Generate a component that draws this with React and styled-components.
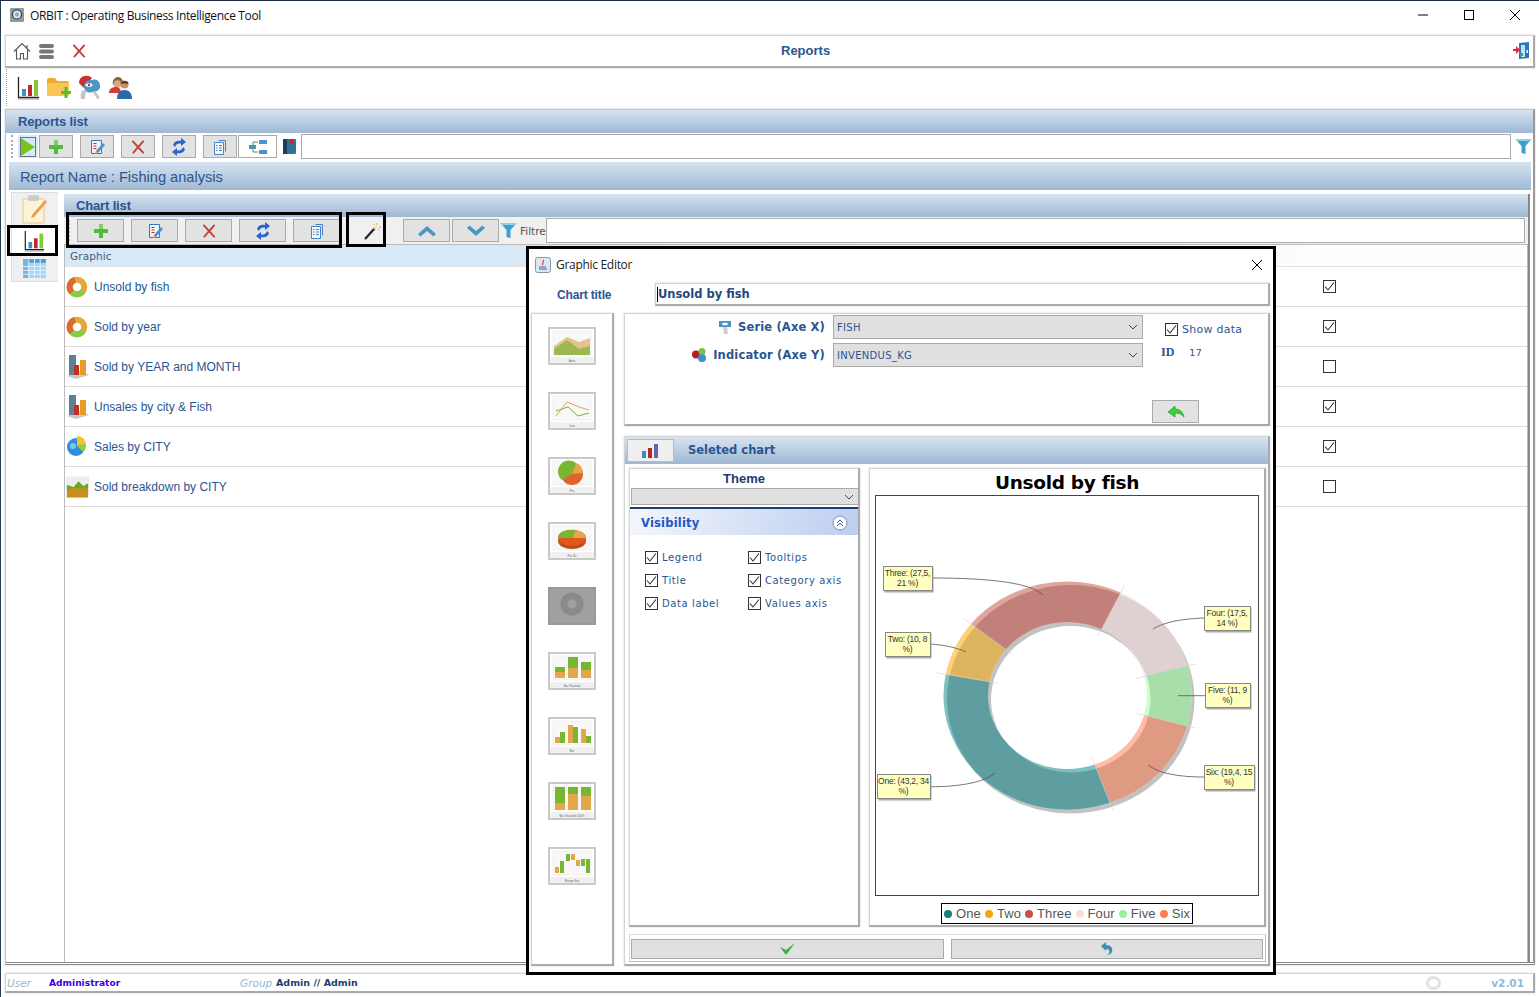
import React from "react";
import styled, { createGlobalStyle, css } from "styled-components";

const Global = createGlobalStyle`
  html, body { margin: 0; padding: 0; background: #fff; }
  * { box-sizing: border-box; }
`;
const NAVY = "#2a5590";
const tahoma = `"Liberation Sans", Arial, sans-serif`;
const verdana = `"DejaVu Sans", Verdana, sans-serif`;
const raised = css`
  background: #fff;
  border: 1px solid #d4d4d4;
  border-right: 2px solid #aaa;
  border-bottom: 2px solid #aaa;
  box-shadow: 0 0 2px rgba(0,0,0,.18);
`;
const blueBar = css`background: linear-gradient(#d6e3f1, #9fb8d3);`;

const Root = styled.div`
  position: relative; width: 1539px; height: 997px; overflow: hidden; background: #fff;
  display: flex; flex-direction: column; border-top: 1px solid #1c2a44; border-left: 1px solid #2a3a55;
  font-family: ${tahoma};
`;
const TitleBar = styled.div`height: 34px; display: flex; align-items: center; padding: 0 1px 6px 8px; flex: none;`;
const TitleText = styled.span`font: 12px "Open Sans", sans-serif; color: #111; margin-left: 5px; letter-spacing: -.36px;`;
const WinButtons = styled.div`margin-left: auto; display: flex; align-items: center;`;
const WinBtn = styled.div`width: 46px; height: 28px; display: flex; align-items: center; justify-content: center;`;
const HeaderBar = styled.div`
  ${raised}; flex: none; height: 33px; margin: 0 4px 0 4px; display: flex; align-items: center; padding: 0 3px 1px 6px; position: relative;
`;
const HeaderIcons = styled.div`display: flex; align-items: center; gap: 6px; width: 769px;`;
const HeaderTitle = styled.div`font: bold 13px ${tahoma}; color: ${NAVY}; width: 50px; white-space: nowrap;`;
const EndGroup = styled.div`margin-left: auto; display: flex; align-items: center;`;
const MainTools = styled.div`flex: none; height: 37px; margin: 1px 0 0 5px; display: flex; align-items: center; gap: 6px; padding-left: 9px; border-left: 1px dotted #999;`;
const ReportsPanel = styled.div`
  flex: 1; min-height: 0; margin: 3px 4px 0 4px; border: 1px solid #c4c4c4; border-right: 2px solid #999; border-bottom: 3px double #888;
  display: flex; flex-direction: column; box-shadow: 0 0 2px rgba(0,0,0,.2);
`;
const PanelHead = styled.div`
  ${blueBar}; flex: none; height: 23px; display: flex; align-items: center; padding: 0 0 0 ${p => p.$pl}px;
  font: bold 13px ${tahoma}; color: ${NAVY}; letter-spacing: -.15px;
`;
const ReportTools = styled.div`flex: none; height: 27px; display: flex; align-items: center; padding: 0 1px 0 3px;`;
const Grip = styled.div`width: ${p => p.$w}px; flex: none; align-self: stretch; margin: 2px 0 2px ${p => p.$ml || 0}px; border-left: 2px dotted #aaa;`;
const PlayBtn = styled.div`width: 20px; height: 23px; background: #d6eaf8; display: flex; align-items: center; justify-content: center; margin-right: 1px; flex: none;`;
const ToolBtn = styled.button`
  width: ${p => p.$w || 34}px; height: 23px; padding: 0; margin-right: ${p => p.$mr ?? 7}px; flex: none;
  background: ${p => p.$white ? "#fff" : "#e2e2e2"}; border: 1px solid #aaa; display: flex; align-items: center; justify-content: center;
`;
const SearchBox = styled.input`flex: 1; min-width: 0; height: 25px; border: 1px solid #aaa; background: #fff; outline: none;`;
const ReportBar = styled.div`
  ${blueBar}; flex: none; height: 28px; margin: 2px 2px 0 3px; display: flex; align-items: center; padding: 2px 0 0 11px;
  font: 14.6px ${tahoma}; color: ${NAVY};
`;
const Body = styled.div`flex: 1; min-height: 0; display: flex; padding: 2px 3px 0 5px;`;
const SideTabs = styled.div`width: 47px; height: 90px; flex: none; display: flex; flex-direction: column; border: 1px solid #ddd; border-right: none; background: #f0f0f0;`;
const SideTab = styled.div`height: ${p => p.$h}px; display: flex; align-items: center; justify-content: center; padding-right: 2px; background: ${p => p.$active ? "#fff" : "#f0f0f0"};`;
const ChartPanel = styled.div`flex: 1; min-width: 0; margin: 2px 0 0 6px; display: flex; flex-direction: column; border-right: 2px solid #888;`;
const ChartTools = styled.div`flex: none; height: 27px; background: #f0f0f0; display: flex; align-items: center; padding: 1px 3px 1px 4px;`;
const Spacer = styled.div`width: ${p => p.$w}px; flex: none; display: flex; justify-content: ${p => p.$j || "center"};`;
const FiltreLabel = styled.span`font: 10.5px ${verdana}; color: #555; width: 26px; overflow: hidden; white-space: nowrap; flex: none;`;
const Table = styled.div`flex: 1; min-height: 0; border: 1px solid #bbb; border-bottom: none;`;
const TableHead = styled.div`
  height: 22px; background: linear-gradient(90deg, #d7e8f6 35%, #fbfdfe 85%); border-bottom: 1px solid #e2e2e2;
  display: flex; align-items: center; padding-left: 5px; font: 10.5px ${verdana}; color: #44607c; letter-spacing: .1px;
`;
const Row = styled.div`height: 40px; display: flex; align-items: center; padding: 0 191px 0 1px; border-bottom: 1px solid #ddd;`;
const RowIcon = styled.div`width: 28px; display: flex; justify-content: flex-start; flex: none;`;
const RowText = styled.span`font: 12px ${tahoma}; color: ${NAVY}; flex: 1;`;
const Box = styled.span`
  width: 13px; height: 13px; border: 1px solid #333; background: #fff; display: inline-flex; align-items: center; justify-content: center; flex: none;
`;
const StatusBar = styled.div`
  ${raised}; flex: none; height: 20px; margin: 8px 4px 4px 4px; display: flex; align-items: center; padding: 0 9px 0 1px;
`;
const StatusKey = styled.span`font: italic 10.5px ${verdana}; color: #93b8d2; width: ${p => p.$w}px; flex: none;`;
const StatusVal = styled.span`font: bold ${p => p.$fs}px ${verdana}; color: ${p => p.$c}; width: ${p => p.$w}px; flex: none;`;
const Version = styled.span`font: bold 10.5px ${verdana}; color: #8fbbd8;`;
const Ring = styled.span`width: 15px; height: 14px; border: 3px solid #e2e2e2; border-radius: 50%; margin-right: 50px;`;

const Highlight = styled.div`
  position: absolute; left: ${p => p.$x}px; top: ${p => p.$y}px; width: ${p => p.$w}px; height: ${p => p.$h}px;
  border: 3px solid #000; pointer-events: none;
`;

/* dialog */
const Dialog = styled.div`
  position: absolute; left: 525px; top: 245px; width: 750px; height: 729px; background: #fff; border: 3px solid #000;
  display: flex; flex-direction: column; font-family: ${tahoma};
`;
const DlgTitle = styled.div`flex: none; height: 32px; display: flex; align-items: center; padding: 0 10px 1px 6px;`;
const DlgTitleText = styled.span`font: 12px "Open Sans", sans-serif; color: #222; margin-left: 5px; letter-spacing: -.3px;`;
const DlgClose = styled.div`margin-left: auto; display: flex;`;
const TitleRow = styled.div`flex: none; height: 32px; display: flex; align-items: center; padding: 2px 3px 7px 28px;`;
const TitleLabel = styled.label`font: bold 12px ${tahoma}; color: ${NAVY}; width: 98px; flex: none; letter-spacing: -.15px;`;
const TitleInput = styled.div`
  ${raised}; flex: 1; height: 23px; font: bold 11.5px ${verdana}; color: #23497f; display: flex; align-items: center; padding-left: 1px;
`;
const Caret = styled.span`width: 1px; height: 15px; background: #000;`;
const DlgBody = styled.div`flex: 1; min-height: 0; display: flex; padding: 0 3px 6px 2px; gap: 10px;`;
const ThumbCol = styled.div`${raised}; width: 83px; flex: none; display: flex; flex-direction: column; align-items: center; gap: 27px; padding-top: 13px; padding-right: 1px;`;
const Thumb = styled.div`width: 48px; height: 38px; border: 2px solid ${p => p.$off ? "#999" : "#c9c9c9"}; background: ${p => p.$off ? "#a0a0a0" : "#fff"}; flex: none;`;
const RightCol = styled.div`flex: 1; min-width: 0; display: flex; flex-direction: column; gap: 10px;`;
const FormPanel = styled.div`
  ${raised}; flex: none; height: 113px; display: grid; grid-template-columns: 200px 310px 1fr; grid-template-rows: 24px 24px 1fr;
  column-gap: 8px; row-gap: 4px; padding: 1px 0 0 0; align-items: center;
`;
const FieldLabel = styled.label`display: flex; justify-content: flex-end; align-items: center; gap: 5px; font: bold 11.5px ${verdana}; color: ${NAVY}; letter-spacing: .15px;`;
const Select = styled.div`
  height: 24px; background: #e0e0e0; border: 1px solid #aaa; font: 10px ${verdana}; color: ${NAVY}; display: flex; align-items: center; justify-content: space-between;
  padding: 0 4px 0 3px; letter-spacing: .3px;
`;
const ShowData = styled.label`display: flex; align-items: center; gap: 4px; font: 11px ${verdana}; color: ${NAVY}; padding: 4px 0 0 14px; letter-spacing: .25px;`;
const IdLine = styled.div`display: flex; align-items: center; padding: 0 0 6px 10px; gap: 15px; color: ${NAVY};`;
const IdKey = styled.b`font: bold 12px "Liberation Serif", serif;`;
const IdVal = styled.span`font: 9.5px ${verdana}; letter-spacing: .3px;`;
const BackRow = styled.div`grid-column: 3; grid-row: 3; align-self: end; padding: 0 0 1px 1px; display: flex;`;
const ChartGroup = styled.div`${raised}; flex: 1; min-height: 0; display: flex; flex-direction: column;`;
const GroupHead = styled.div`${blueBar}; flex: none; height: 27px; display: flex; align-items: center; padding-left: 2px;`;
const GroupTab = styled.div`width: 47px; height: 23px; background: #efefef; border: 1px solid #bbb; display: flex; align-items: center; justify-content: center; margin-right: 14px;`;
const GroupTitle = styled.span`font: bold 11.5px ${verdana}; color: ${NAVY}; padding-bottom: 1px;`;
const GroupMain = styled.div`flex: 1; min-height: 0; display: flex; flex-direction: column; padding: 4px 2px 2px 4px;`;
const Split = styled.div`flex: none; height: 459px; display: flex; gap: 9px;`;
const ThemeCol = styled.div`${raised}; width: 231px; flex: none; display: flex; flex-direction: column;`;
const ThemeTitle = styled.div`text-align: center; font: bold 13px ${tahoma}; color: #1d3c6c; height: 19px; line-height: 20px;`;
const ThemeSelect = styled(Select)`height: 17px; margin: 0 0 0 1px; width: 228px; justify-content: flex-end;`;
const VisHead = styled.div`
  margin-top: 2px; border-top: 2px solid #1f3f72; height: 28px; background: linear-gradient(100deg, #f4f6fc, #bccef0); display: flex; align-items: center; justify-content: space-between;
  padding: 1px 10px 0 11px; font: bold 11.5px ${verdana}; color: #2156c6; letter-spacing: .2px;
`;
const Checks = styled.div`display: grid; grid-template-columns: 103px 1fr; row-gap: 9px; padding: 15px 0 0 15px;`;
const CheckLabel = styled.label`display: flex; align-items: center; gap: 4px; font: 10px ${verdana}; color: ${NAVY}; letter-spacing: .6px; height: 14px;`;
const PlotCol = styled.div`${raised}; flex: 1; min-width: 0; display: flex; flex-direction: column; align-items: center; padding: 0 5px;`;
const PlotTitle = styled.div`font: bold 18.5px ${verdana}; color: #000; height: 26px; line-height: 28px; letter-spacing: -.3px;`;
const PlotBox = styled.div`width: 100%; height: 401px; border: 1px solid #444; flex: none;`;
const LegendBox = styled.div`
  margin-top: 7px; height: 21px; border: 1px solid #000; display: flex; align-items: center; padding: 0 2px; gap: 4px; font: 13px ${tahoma}; color: #555; letter-spacing: .1px;
`;
const LegendItem = styled.span`display: inline-flex; align-items: center; gap: 4px;`;
const Dot = styled.i`width: 8px; height: 8px; border-radius: 50%; background: ${p => p.$c}; display: block;`;
const ActionRow = styled.div`
  flex: none; margin-top: 7px; height: 28px; display: flex; gap: 7px; padding: 4px 2px 2px 1px; border: 1px solid #ddd; border-right: 1px solid #bbb; border-bottom: 1px solid #bbb;
`;
const ActionBtn = styled.div`flex: 1; background: #e0e0e0; border: 1px solid #aaa; display: flex; align-items: center; justify-content: center;`;

/* icons */
const S = ({ w = 16, h, vb, children }) => <svg width={w} height={h || w} viewBox={vb || `0 0 ${w} ${h || w}`}>{children}</svg>;
const Logo = () => <S><rect x="1" y="1" width="14" height="14" fill="#8a9aa0" rx="1"/><circle cx="8" cy="7.500" r="4.500" fill="#e8eef0" stroke="#234" strokeWidth="1.200"/><circle cx="8" cy="7.500" r="2.200" fill="#9ab"/></S>;
const Home = () => <S w={20}><path d="M2 10.500 10 2.500l8 8M4.500 9v9h4v-5.500h3V18h4V9M15 4v3" fill="none" stroke="#555" strokeWidth="1.100"/></S>;
const Menu = () => <S w={18} h={16}><rect x="1" y="1" width="15" height="4" rx="2" fill="#777"/><rect x="1" y="6.500" width="15" height="4" rx="2" fill="#777"/><rect x="1" y="12" width="15" height="4" rx="2" fill="#777"/></S>;
const RedX = ({ s = 14 }) => <S w={s} vb="0 0 15 15"><path d="M2 1.500 13 13.500M13 1.500 2.500 13.500" stroke="#c43c3c" strokeWidth="2" strokeLinecap="round"/></S>;
const Bars = ({ s = 24 }) => <S w={s} vb="0 0 24 24"><path d="M2.500 1v20.500H23" fill="none" stroke="#222" strokeWidth="1.300"/><path d="M2 23h21" stroke="#999" strokeWidth="1"/><rect x="6" y="13" width="4" height="7" fill="#3a93c8"/><rect x="12" y="9" width="4" height="11" fill="#c02a2a"/><rect x="18" y="4" width="4" height="16" fill="#86c83c"/></S>;
const FolderPlus = () => <S w={25} h={24}><path d="M1 4q0-2 2-2h6l2 3h10q2 0 2 2v12H1z" fill="#eeaa35"/><path d="M1 9q0-2 2-2h20v12q0 1-1 1H2q-1 0-1-1z" fill="#f9c656"/><path d="M15 15h3.500v-4h3v4h3.500v3h-3.500v4h-3v-4H15z" fill="#5dbb2c"/></S>;
const KeyUser = () => <S w={25} h={25} vb="0 0 23 25"><path d="M1 8c0-5 4-8 9-7 2 0 3 1 4 2L6 13z" fill="#c8322e"/><rect x="6" y="5" width="16" height="12" rx="5" fill="#4a97c4" transform="rotate(-10 14 11)"/><ellipse cx="11" cy="10" rx="3.500" ry="1.800" fill="#fff"/><circle cx="11" cy="10" r="1.200" fill="#c8322e"/><path d="M3 24c-1-4 0-8 3-9l3 1c-2 2-2 5-2 8zM14 17l3-1 4 5c1 2 0 3-2 3-1-3-3-5-5-7z" fill="#c4c4c4"/></S>;
const Users = () => <S w={25} h={24}><path d="M5 9c-1-5 2-8 5-8s6 3 5 8c-3-2-7-2-10 0z" fill="#8a6238"/><circle cx="9.500" cy="8" r="3.800" fill="#dba880"/><path d="M1 17c0-4 3-6 7-6 3 0 5 2 5 6z" fill="#d83a34"/><circle cx="16.500" cy="8.500" r="4" fill="#c98d68"/><path d="M12.500 8c0-4 8-4 8 0-3-1-5-1-8 0z" fill="#4a3424"/><path d="M9 23c0-6 3-9 7.500-9S24 17 24 23z" fill="#2a6aa8"/></S>;
const Play = () => <S w={16} h={20}><path d="M1 1 15 10 1 19z" fill="#7cc321"/><path d="M.5.500h15v19H.5z" fill="none" stroke="#000" strokeDasharray="1 1"/></S>;
const Plus = () => <S><path d="M6 1h4v5h5v4h-5v5H6v-5H1V6h5z" fill="#54bb3a"/><path d="M6 1h4v5H6z" fill="#7ad35f"/></S>;
const Edit = () => <S><path d="M2.500 1.500h10v13h-10z" fill="#eef4fb" stroke="#3a75ba"/><path d="M4.500 4.500h3M4.500 7h3M4.500 9.500h3" stroke="#d22"/><path d="M7 12 14 4l2 2-7 8-3 1z" fill="#4a92d8"/><path d="M6 15l1-3 2 2z" fill="#f0b030"/></S>;
const Refresh = () => <S h={18}><path d="M2 7c1-4 5-5 8-4V0l5 4-5 4V5.500C7 5 5 6 4 9z" fill="#2a62cc"/><path d="M14 11c-1 4-5 5-8 4v3l-5-4 5-4v2.500c3 .5 5-.5 6-3.500z" fill="#2a62cc"/></S>;
const Copy = () => <S><path d="M6.500 1.500h7v11" fill="none" stroke="#4a82c0"/><path d="M2.500 3.500h9v12h-9z" fill="#f2f7fc" stroke="#4a82c0"/><path d="M4 6.500h1.500M7 6.500h3M4 9h1.500M7 9h3M4 11.500h1.500M7 11.500h3" stroke="#4a82c0"/></S>;
const Tree = () => <S w={18} h={16}><rect x="0" y="6" width="7" height="4" fill="#4a92c8"/><rect x="10" y="1" width="8" height="4" fill="#4a92c8"/><rect x="10" y="11" width="8" height="4" fill="#4a92c8"/><path d="M4 6V3h5M4 10v3h5" fill="none" stroke="#4a9a30"/></S>;
const Book = () => <S w={14} h={17}><rect x="1" y="1" width="13" height="15" rx="1" fill="#2f7397"/><rect x="1" y="1" width="4" height="15" fill="#1c3f5e"/><rect x="8" y="1" width="3" height="5" fill="#c22"/></S>;
const Funnel = () => <S w={17} h={17}><path d="M.5 1h16l-6 7v8l-4-1V8z" fill="#3d9fcb"/><path d="M.5 1h16l-2 2h-12z" fill="#8fd0ea"/></S>;
const Wand = () => <S w={18} h={18}><path d="M2 17 12 6" stroke="#222" strokeWidth="2.200"/><path d="M11 7 14 4" stroke="#ddd" strokeWidth="2"/><path d="M14 1v2M16 5h2M11 2l1 1M16 8l-1-1" stroke="#e8a820" strokeWidth="1"/></S>;
const Chev = ({ up }) => <S w={18} h={12}><path d={up ? "M0 9 9 1l9 8-2.500 2.500L9 6l-6.500 5.500z" : "M0 3l9 8 9-8L15.500.500 9 6 2.500.500z"} fill="#4a97c4"/></S>;
const Door = () => <S w={17} h={17}><path d="M6 1l10-1v16l-10 1z" fill="#2f73ba"/><rect x="8" y="3" width="4" height="12" fill="#bfe3f5"/><rect x="13.500" y="8" width="1.500" height="3" fill="#fff"/><path d="M0 7h3V4l4 4-4 4V9H0z" fill="#e8204a"/><rect x="7" y="11" width="3" height="3" fill="#49a84a"/></S>;
const Java = () => <S><rect x=".5" y=".5" width="15" height="15" rx="2" fill="#dde6f0" stroke="#7f98b4"/><path d="M8 3c2 2-2 3 0 5" stroke="#d8442a" fill="none" strokeWidth="1.300"/><path d="M4 10h7M4 12h8" stroke="#3a6a9a"/></S>;
const DonutIcon = () => <S w={22} h={24} vb="0 0 24 26"><g transform="translate(0 1)"><circle cx="12" cy="12" r="8" fill="none" stroke="#e8a63a" strokeWidth="6.500"/><path d="M10 4.200A8 8 0 0 0 6.500 17.800" fill="none" stroke="#dd6a30" strokeWidth="6.500"/><path d="M18.500 16.500A8 8 0 0 1 6.500 17.800" fill="none" stroke="#86cc44" strokeWidth="6.500"/></g></S>;
const Bar3D = () => <S w={24} h={26}><path d="M1 22l14-5 8 4-13 4z" fill="#c8c8c8"/><rect x="3" y="1" width="7" height="20" fill="#5f7f92"/><rect x="8" y="11" width="5" height="10" fill="#c03020"/><rect x="14" y="6" width="6" height="15" fill="#e89a2a"/></S>;
const PieBlue = () => <S w={22} h={24}><circle cx="10" cy="12" r="9" fill="#2f8ee0"/><path d="M11 11V1a9 9 0 0 1 9 8z" fill="#f4c230"/><path d="M11 11l9-2a9 9 0 0 1-3 8z" fill="#90cf40"/><circle cx="7" cy="11" r="3" fill="#7fc4f4"/></S>;
const AreaIcon = () => <S w={23} h={22} vb="0 0 24 22"><rect width="24" height="22" fill="#eee"/><path d="M1 9l7 2 5-6 5 5 5-3v8H1z" fill="#6aa824"/><path d="M1 14l7-3 6 2 5-2 4 3v8H1z" fill="#c98f1c"/></S>;
const Note = () => <S w={30} h={30}><rect x="4" y="5" width="21" height="24" rx="1" fill="#fdf3d6" stroke="#e7c884"/><rect x="9" y="1" width="11" height="6" rx="2" fill="#ccc"/><path d="M13 21 26 6l2 2-13 15-3 1z" fill="#ef9a50"/></S>;
const GridIcon = () => <S w={23} h={19} vb="0 0 24 20"><rect width="24" height="20" fill="#a6d4f4"/><rect width="24" height="4" fill="#4d9edc"/><rect width="5" height="20" fill="#6cb6ea"/><path d="M0 8h24M0 12h24M0 16h24M6 0v20M12 0v20M18 0v20" stroke="#e4f2fc"/></S>;
const DownV = () => <S w={10} h={6}><path d="M1 1l4 4 4-4" fill="none" stroke="#444"/></S>;
const Tick = () => <S w={11} h={11}><path d="M1 5.500 4 9 10 1.500" fill="none" stroke="#333" strokeWidth="1.100"/></S>;
const Serie = () => <S w={17} h={17}><path d="M3 2h12v6H3z" fill="#4a97c4"/><ellipse cx="9" cy="5" rx="3" ry="1.200" fill="#fff"/><path d="M7 8h4l1 7H8z" fill="#ccc"/></S>;
const Indic = () => <S w={17} h={17}><circle cx="5" cy="7.500" r="4" fill="#b3201e"/><circle cx="11" cy="4.500" r="3.500" fill="#7cc33c"/><circle cx="11" cy="11" r="4" fill="#3d93c4"/></S>;
const GreenBack = () => <S w={18} h={14}><path d="M1 7 8 1v3c5 0 8 3 9 8-2-3-5-4-9-4v4z" fill="#3ad13a" stroke="#1a8a1a" strokeWidth=".6"/></S>;
const Check = () => <S w={17} h={14}><path d="M1 5l6 8L16 1 7 8z" fill="#3cae3c"/></S>;
const Undo = () => <S w={16} h={16}><path d="M2 5l5-4v3c5 0 7 3 6 7-1 2-3 3-5 3 2-1 3-3 2-5-1-1-2-1-3-1v2z" fill="#3c8ec0"/></S>;
const Collapse = () => <S w={16}><circle cx="8" cy="8" r="7" fill="#fff" stroke="#7f8fae"/><path d="M5 8l3-3 3 3M5 11l3-3 3 3" fill="none" stroke="#2a56b0"/></S>;
const Mini = () => <S w={20} h={16}><rect x="1" y="8" width="4" height="7" fill="#3a8cc0"/><rect x="7" y="5" width="4" height="10" fill="#b82a2a"/><rect x="13" y="1" width="4" height="14" fill="#5f68a8"/></S>;
const Min = () => <S w={12}><path d="M1 6h10" stroke="#000" strokeWidth="1"/></S>;
const Max = () => <S w={12}><rect x="1.500" y="1.500" width="9" height="9" fill="none" stroke="#000"/></S>;
const Close = () => <S w={12}><path d="M1 1l10 10M11 1 1 11" stroke="#000" strokeWidth="1"/></S>;

/* thumbs */
const Frame = ({ label, children }) => (
  <svg width="44" height="34" viewBox="0 0 44 34">
    <rect x="3" y="2" width="38" height="24" fill="#f8f8f8" stroke="#e4e4e4" strokeWidth=".5" />
    {children}
    <rect x="0" y="28" width="44" height="6" fill="#f0f0f0" />
    <text x="22" y="32.500" fontSize="3" textAnchor="middle" fill="#666" fontFamily="Liberation Sans">{label}</text>
  </svg>
);
const G = "#78b532", O = "#e3a64a";
const bars = arr => arr.map(([x, y, w, h, c], i) => <rect key={i} x={x} y={y} width={w} height={h} fill={c} />);
const thumbs = [
  <Frame label="Area"><path d="M4 17 17 8l12 5 11-4v17H4z" fill="#e4c48c"/><path d="M4 20l13-9 12 9 11-3v9H4z" fill="#9cb850"/></Frame>,
  <Frame label="Line"><path d="M6 22 17 8l12 5 10 3" fill="none" stroke={O}/><path d="M6 17l12-4 10 9 11-3" fill="none" stroke={G}/></Frame>,
  <Frame label="Pie"><circle cx="22" cy="15" r="11" fill="#e2622c"/><path d="M22 15 12 21A11 11 0 0 1 26 4z" fill={G}/><path d="M22 15 26 4A11 11 0 0 1 33 14z" fill={O}/></Frame>,
  <Frame label="Pie 3D"><ellipse cx="22" cy="17" rx="14" ry="8" fill="#b84c1c"/><ellipse cx="22" cy="14" rx="14" ry="8" fill="#e0581c"/><path d="M22 14 8 14A14 8 0 0 1 26 6z" fill={G}/><path d="M22 14 26 6A14 8 0 0 1 36 14z" fill={O}/></Frame>,
  <svg width="44" height="34" viewBox="0 0 44 34"><circle cx="22" cy="15" r="8" fill="none" stroke="#8a8a8a" strokeWidth="7"/></svg>,
  <Frame label="Bar Stacked">{bars([[5,13,10,5,G],[5,18,10,6,O],[18,3,10,11,G],[18,14,10,10,O],[31,8,10,8,G],[31,16,10,8,O]])}</Frame>,
  <Frame label="Bar">{bars([[5,18,5,6,O],[10,13,5,11,G],[18,6,5,18,O],[23,8,5,16,G],[31,10,5,14,O],[36,17,5,7,G]])}</Frame>,
  <Frame label="Bar Stacked 100%">{bars([[5,3,10,16,G],[5,19,10,7,O],[18,3,10,7,G],[18,10,10,16,O],[31,3,10,9,G],[31,12,10,14,O]])}</Frame>,
  <Frame label="Range Bar">{bars([[5,18,4,6,O],[10,12,4,12,G],[16,5,4,7,G],[21,5,4,6,O],[26,11,4,6,O],[31,10,4,7,G],[36,10,4,14,G]])}</Frame>,
];

/* donut */
const CX = 1067.5, CY = 695.5, RX = 124, RY = 114, IX = 79.5, IY = 73.5;
const P = (rx, ry, d) => `${(CX + rx * Math.cos(d * Math.PI / 180)).toFixed(2)} ${(CY + ry * Math.sin(d * Math.PI / 180)).toFixed(2)}`;
const arc = (a, b) => {
  const l = b - a > 180 ? 1 : 0;
  return `M${P(RX, RY, a)}A${RX} ${RY} 0 ${l} 1 ${P(RX, RY, b)}L${P(IX, IY, b)}A${IX} ${IY} 0 ${l} 0 ${P(IX, IY, a)}Z`;
};
const fullRing = arc(0, 179.99) + arc(180, 359.99);
const slices = [
  { id: "four", a: -64.6, b: -15.1, dark: "#dfd1d1", light: "#f6e9e9" },
  { id: "five", a: -15.1, b: 15.5, dark: "#a8dfa8", light: "#ccffcc" },
  { id: "six", a: 15.5, b: 70, dark: "#de9b82", light: "#ffbba3" },
  { id: "one", a: 70, b: 190.8, dark: "#5f9ea0", light: "#7cc0c2" },
  { id: "two", a: 190.8, b: 218.9, dark: "#dfb45f", light: "#ffd27a" },
  { id: "three", a: 218.9, b: 295.4, dark: "#c1807a", light: "#e2a49e" },
];
const labels = [
  { x: 883, y: 566, w: 49, h: 25, t: ["Three: (27,5,", "21 %)"], d: "M932 578C985 578 1030 582 1043 595" },
  { x: 1204, y: 606, w: 46, h: 25, t: ["Four: (17,5,", "14 %)"], d: "M1204 618C1180 619 1165 622 1153 629" },
  { x: 885, y: 632, w: 45, h: 25, t: ["Two: (10, 8", "%)"], d: "M930 644C945 645 958 648 966 652" },
  { x: 1205, y: 683, w: 45, h: 25, t: ["Five: (11, 9", "%)"], d: "M1205 695.700H1178" },
  { x: 877, y: 774, w: 53, h: 25, t: ["One: (43,2, 34", "%)"], d: "M930 786.700C960 787 985 782 995 773" },
  { x: 1204, y: 765, w: 50, h: 25, t: ["Six: (19,4, 15", "%)"], d: "M1204 777C1180 777 1160 774 1148 765" },
];
const Donut = () => (
  <svg width="383" height="399" viewBox="876 496 383 399" style={{ display: "block" }}>
    <defs>
      {slices.map(s => <clipPath key={s.id} id={s.id}><path d={arc(s.a, s.b)} /></clipPath>)}
    </defs>
    <path d={fullRing} fill="#c2c2c2" transform="translate(3 4)" />
    {slices.map(s => (
      <g key={s.id}>
        <path d={arc(s.a, s.b)} fill={s.light} />
        <g clipPath={`url(#${s.id})`}><path d={fullRing} fill={s.dark} transform="translate(3.500 3.500)" /></g>
      </g>
    ))}
    {slices.map(s => {
      const [x1, y1] = P(IX - 9, IY - 8, s.a).split(" "), [x2, y2] = P(RX + 9, RY + 8, s.a).split(" ");
      return <line key={s.id} x1={x1} y1={y1} x2={x2} y2={y2} stroke="#cfcfcf" strokeWidth=".6" />;
    })}
    {labels.map(l => (
      <g key={l.t[0]}>
        <path d={l.d} fill="none" stroke="#555" strokeWidth=".8" />
        <rect x={l.x + 1.500} y={l.y + 1.500} width={l.w} height={l.h} fill="#aaa" />
        <rect x={l.x + .5} y={l.y + .5} width={l.w} height={l.h - 1} fill="#ffffc0" stroke="#888" />
        {l.t.map((t, i) => (
          <text key={t} x={l.x + l.w / 2} y={l.y + 10 + i * 10} textAnchor="middle" fontSize="8.500" letterSpacing="-.25" fontFamily="Liberation Sans" fill="#333">{t}</text>
        ))}
      </g>
    ))}
  </svg>
);

const rows = [
  ["Unsold by fish", <DonutIcon />, true],
  ["Sold by year", <DonutIcon />, true],
  ["Sold by YEAR and MONTH", <Bar3D />, false],
  ["Unsales by city & Fish", <Bar3D />, true],
  ["Sales by CITY", <PieBlue />, true],
  ["Sold breakdown by CITY", <AreaIcon />, false],
];
const checks = ["Legend", "Tooltips", "Title", "Category axis", "Data label", "Values axis"];
const legend = [["One", "#148080"], ["Two", "#f5a60d"], ["Three", "#c8503f"], ["Four", "#fbdcd6"], ["Five", "#98f098"], ["Six", "#ff7f50"]];

export default function App() {
  return (
    <Root>
      <Global />
      <TitleBar>
        <Logo />
        <TitleText>ORBIT : Operating Business Intelligence Tool</TitleText>
        <WinButtons>
          <WinBtn><Min /></WinBtn><WinBtn><Max /></WinBtn><WinBtn><Close /></WinBtn>
        </WinButtons>
      </TitleBar>
      <HeaderBar>
        <HeaderIcons><Home /><Menu /><Spacer $w={4} /><RedX s={14} /></HeaderIcons>
        <HeaderTitle>Reports</HeaderTitle>
        <EndGroup><Door /></EndGroup>
      </HeaderBar>
      <MainTools><Bars /><FolderPlus /><KeyUser /><Users /></MainTools>
      <ReportsPanel>
        <PanelHead $pl={12}>Reports list</PanelHead>
        <ReportTools>
          <Grip $ml={2} $w={7} />
          <PlayBtn><Play /></PlayBtn>
          <ToolBtn><Plus /></ToolBtn>
          <ToolBtn><Edit /></ToolBtn>
          <ToolBtn><RedX /></ToolBtn>
          <ToolBtn><Refresh /></ToolBtn>
          <ToolBtn $mr={1}><Copy /></ToolBtn>
          <ToolBtn $w={39} $white $mr={4}><Tree /></ToolBtn>
          <Spacer $w={15}><Book /></Spacer>
          <Spacer $w={5} />
          <SearchBox />
          <Spacer $w={21} $j="flex-end"><Funnel /></Spacer>
        </ReportTools>
        <ReportBar>Report Name : Fishing analysis</ReportBar>
        <Body>
          <SideTabs>
            <SideTab $h={32}><Note /></SideTab>
            <SideTab $h={31} $active><Bars s={22} /></SideTab>
            <SideTab $h={25}><GridIcon /></SideTab>
          </SideTabs>
          <ChartPanel>
            <PanelHead $pl={12}>Chart list</PanelHead>
            <ChartTools>
              <Grip $w={9} />
              <ToolBtn $w={47}><Plus /></ToolBtn>
              <ToolBtn $w={47}><Edit /></ToolBtn>
              <ToolBtn $w={47}><RedX /></ToolBtn>
              <ToolBtn $w={47}><Refresh /></ToolBtn>
              <ToolBtn $w={47} $mr={0}><Copy /></ToolBtn>
              <Spacer $w={63}><Wand /></Spacer>
              <ToolBtn $w={47} $mr={2}><Chev up /></ToolBtn>
              <ToolBtn $w={47} $mr={1}><Chev /></ToolBtn>
              <Spacer $w={19} $j="flex-start"><Funnel /></Spacer>
              <Spacer $w={1} />
              <FiltreLabel>Filtre</FiltreLabel>
              <SearchBox />
            </ChartTools>
            <Table>
              <TableHead>Graphic</TableHead>
              {rows.map(([t, icon, on]) => (
                <Row key={t}>
                  <RowIcon>{icon}</RowIcon>
                  <RowText>{t}</RowText>
                  <Box>{on && <Tick />}</Box>
                </Row>
              ))}
            </Table>
          </ChartPanel>
        </Body>
      </ReportsPanel>
      <StatusBar>
        <StatusKey $w={42}>User</StatusKey>
        <StatusVal $w={191} $fs={9.1} $c="#3a00ee">Administrator</StatusVal>
        <StatusKey $w={36}>Group</StatusKey>
        <StatusVal $w={200} $fs={9.5} $c="#24406e">Admin // Admin</StatusVal>
        <EndGroup><Ring /><Version>v2.01</Version></EndGroup>
      </StatusBar>

      <Highlight $x={65} $y={211} $w={276} $h={36} />
      <Highlight $x={345} $y={211} $w={40} $h={35} />
      <Highlight $x={6} $y={224} $w={51} $h={31} />

      <Dialog>
        <DlgTitle>
          <Java />
          <DlgTitleText>Graphic Editor</DlgTitleText>
          <DlgClose><Close /></DlgClose>
        </DlgTitle>
        <TitleRow>
          <TitleLabel>Chart title</TitleLabel>
          <TitleInput><Caret />Unsold by fish</TitleInput>
        </TitleRow>
        <DlgBody>
          <ThumbCol>
            {thumbs.map((t, i) => <Thumb key={i} $off={i === 4}>{t}</Thumb>)}
          </ThumbCol>
          <RightCol>
            <FormPanel>
              <FieldLabel><Serie />Serie (Axe X)</FieldLabel>
              <Select>FISH<DownV /></Select>
              <ShowData><Box><Tick /></Box>Show data</ShowData>
              <FieldLabel><Indic />Indicator (Axe Y)</FieldLabel>
              <Select>INVENDUS_KG<DownV /></Select>
              <IdLine><IdKey>ID</IdKey><IdVal>17</IdVal></IdLine>
              <BackRow><ToolBtn $w={47}><GreenBack /></ToolBtn></BackRow>
            </FormPanel>
            <ChartGroup>
              <GroupHead>
                <GroupTab><Mini /></GroupTab>
                <GroupTitle>Seleted chart</GroupTitle>
              </GroupHead>
              <GroupMain>
                <Split>
                  <ThemeCol>
                    <ThemeTitle>Theme</ThemeTitle>
                    <ThemeSelect><DownV /></ThemeSelect>
                    <VisHead>Visibility<Collapse /></VisHead>
                    <Checks>
                      {checks.map(c => <CheckLabel key={c}><Box><Tick /></Box>{c}</CheckLabel>)}
                    </Checks>
                  </ThemeCol>
                  <PlotCol>
                    <PlotTitle>Unsold by fish</PlotTitle>
                    <PlotBox><Donut /></PlotBox>
                    <LegendBox>
                      {legend.map(([n, c]) => <LegendItem key={n}><Dot $c={c} />{n}</LegendItem>)}
                    </LegendBox>
                  </PlotCol>
                </Split>
                <ActionRow>
                  <ActionBtn><Check /></ActionBtn>
                  <ActionBtn><Undo /></ActionBtn>
                </ActionRow>
              </GroupMain>
            </ChartGroup>
          </RightCol>
        </DlgBody>
      </Dialog>
    </Root>
  );
}
